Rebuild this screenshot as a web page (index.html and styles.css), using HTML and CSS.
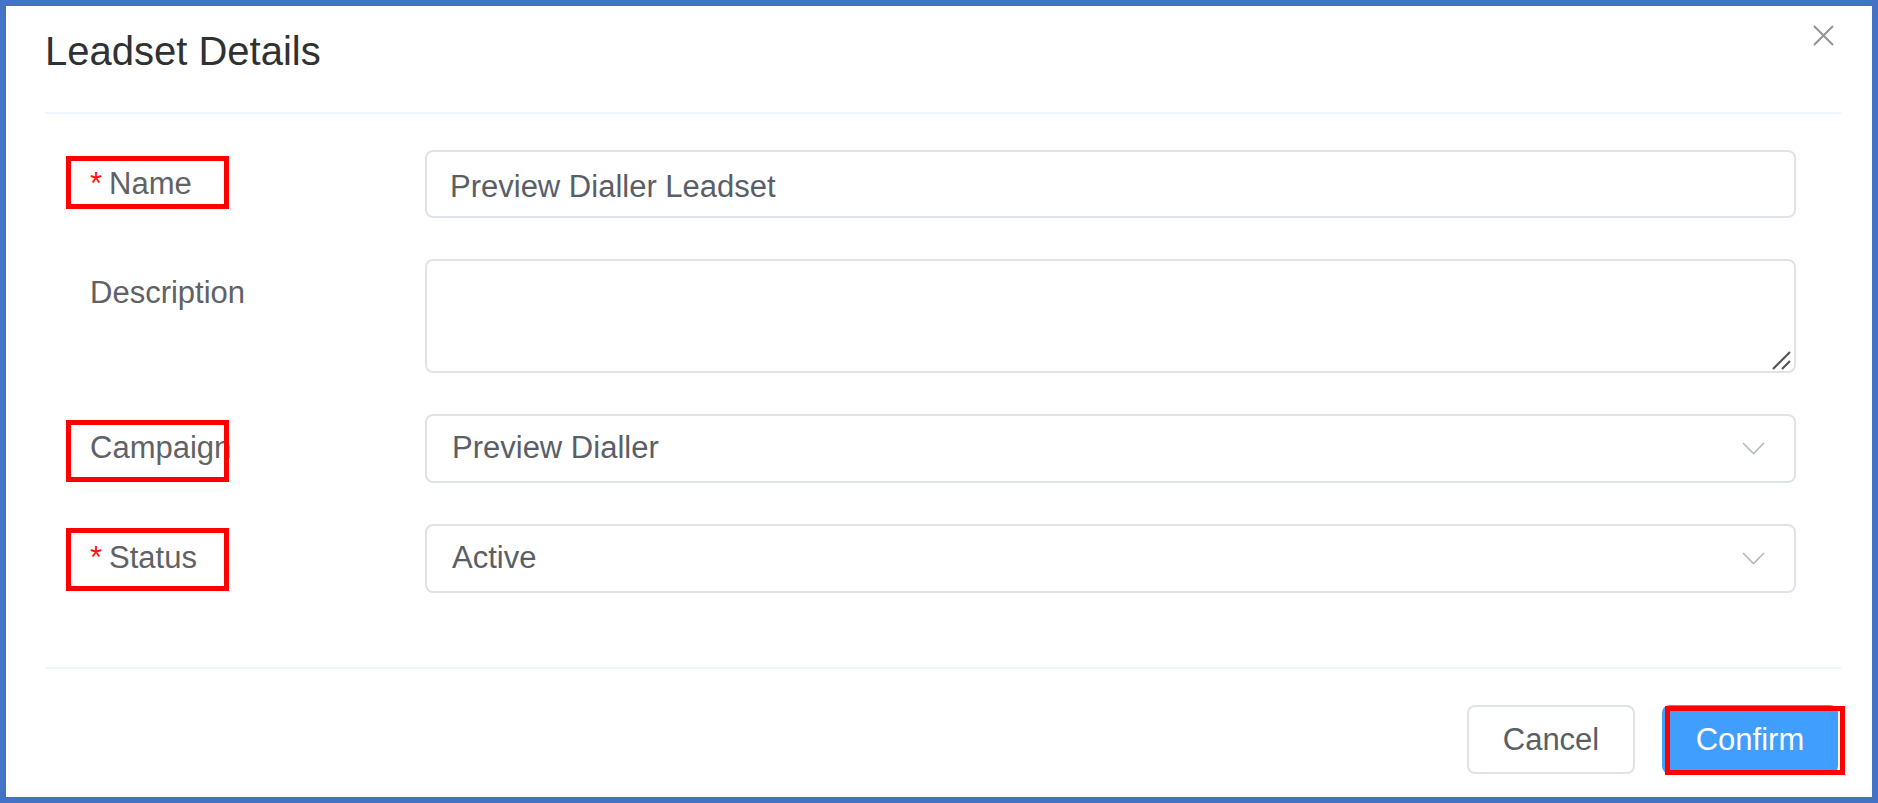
FILE: index.html
```html
<!DOCTYPE html>
<html lang="en">
<head>
<meta charset="utf-8">
<title>Leadset Details</title>
<link rel="stylesheet" href="styles.css">
</head>
<body>
<div class="frame">
  <div class="header">
    <h1 class="title">Leadset Details</h1>
    <button class="close" aria-label="Close">
      <svg width="21" height="21" viewBox="0 0 21 21"><path d="M1 1 L20 20 M20 1 L1 20" stroke="#909399" stroke-width="2" fill="none"/></svg>
    </button>
  </div>
  <div class="form">
    <div class="row">
      <div class="label"><span class="req">*</span>Name<span class="mark mark-name"></span></div>
      <div class="control"><div class="input">Preview Dialler Leadset</div></div>
    </div>
    <div class="row">
      <div class="label">Description</div>
      <div class="control">
        <div class="textarea">
          <svg class="grip" width="20" height="19" viewBox="0 0 20 19"><path d="M1 18 L18 1 M10 18 L18 10" stroke="#555" stroke-width="2.2" fill="none"/></svg>
        </div>
      </div>
    </div>
    <div class="row">
      <div class="label">Campaign<span class="mark mark-campaign"></span></div>
      <div class="control">
        <div class="select"><span>Preview Dialler</span>
          <svg width="23" height="13" viewBox="0 0 23 13"><path d="M1 1 L11.5 11.5 L22 1" stroke="#b4b8c0" stroke-width="1.6" fill="none"/></svg>
        </div>
      </div>
    </div>
    <div class="row">
      <div class="label"><span class="req">*</span>Status<span class="mark mark-status"></span></div>
      <div class="control">
        <div class="select"><span>Active</span>
          <svg width="23" height="13" viewBox="0 0 23 13"><path d="M1 1 L11.5 11.5 L22 1" stroke="#b4b8c0" stroke-width="1.6" fill="none"/></svg>
        </div>
      </div>
    </div>
  </div>
  <div class="footer">
    <button class="btn btn-cancel">Cancel</button>
    <button class="btn btn-confirm">Confirm<span class="mark mark-confirm"></span></button>
  </div>
</div>
</body>
</html>
```

FILE: styles.css
```css
* { box-sizing: border-box; }
html, body { margin: 0; padding: 0; }
body {
  font-family: "Liberation Sans", Arial, Helvetica, sans-serif;
  background: #fff;
}
.frame {
  width: 1878px;
  height: 803px;
  border: 6px solid #4472c4;
  background: #fff;
  padding: 0 31px 0 39px;
  display: flex;
  flex-direction: column;
}
.header {
  position: relative;
  height: 108px;
  border-bottom: 2px solid #f0f5fc;
  padding-top: 22px;
}
.title {
  margin: 0;
  font-size: 40px;
  font-weight: normal;
  line-height: 46px;
  color: #303133;
}
.close {
  position: absolute;
  right: 7px;
  top: 19px;
  width: 21px;
  height: 21px;
  padding: 0;
  border: 0;
  background: none;
}
.close svg { display: block; }
.form {
  padding: 36px 45px 0 0;
  display: flex;
  flex-direction: column;
  gap: 41px;
  height: 555px;
  border-bottom: 2px solid #f0f5fc;
}
.row {
  display: grid;
  grid-template-columns: 380px 1fr;
}
.label {
  position: relative;
  padding-left: 45px;
  font-size: 31px;
  line-height: 68px;
  color: #606266;
  white-space: nowrap;
}
.label-desc { padding-top: 2px; }
.req {
  color: #ff1010;
  margin-right: 7px;
}
.mark {
  position: absolute;
  border: 5px solid #ff0000;
  pointer-events: none;
}
.mark-name { left: 21px; top: 6px; width: 163px; height: 53px; }
.mark-campaign { left: 21px; top: 6px; width: 163px; height: 62px; }
.mark-status { left: 21px; top: 4px; width: 163px; height: 63px; }
.input, .select, .textarea {
  border: 2px solid #dfe2e8;
  border-radius: 8px;
  background: #fff;
  font-size: 31px;
  color: #5a5e66;
}
.input {
  height: 68px;
  line-height: 64px;
  padding: 3px 0 0 23px;
}
.textarea {
  position: relative;
  height: 114px;
}
.grip {
  position: absolute;
  right: 2px;
  bottom: 1px;
}
.select {
  height: 69px;
  padding: 0 29px 0 25px;
  display: flex;
  align-items: center;
  justify-content: space-between;
}
.select span { line-height: 1; margin-top: -2px; }
.select svg { display: block; }
.footer {
  flex: 1;
  display: flex;
  justify-content: flex-end;
  align-items: flex-start;
  padding: 36px 3px 0 0;
  gap: 27px;
}
.btn {
  position: relative;
  height: 69px;
  border-radius: 8px;
  font-family: inherit;
  font-size: 31px;
  padding: 0;
}
.btn-cancel {
  width: 168px;
  border: 2px solid #dfe2e8;
  background: #fff;
  color: #5a5e66;
}
.btn-confirm {
  width: 176px;
  border: 0;
  background: #409eff;
  color: #fff;
}
.mark-confirm { left: 3px; top: 1px; width: 180px; height: 69px; }
```
